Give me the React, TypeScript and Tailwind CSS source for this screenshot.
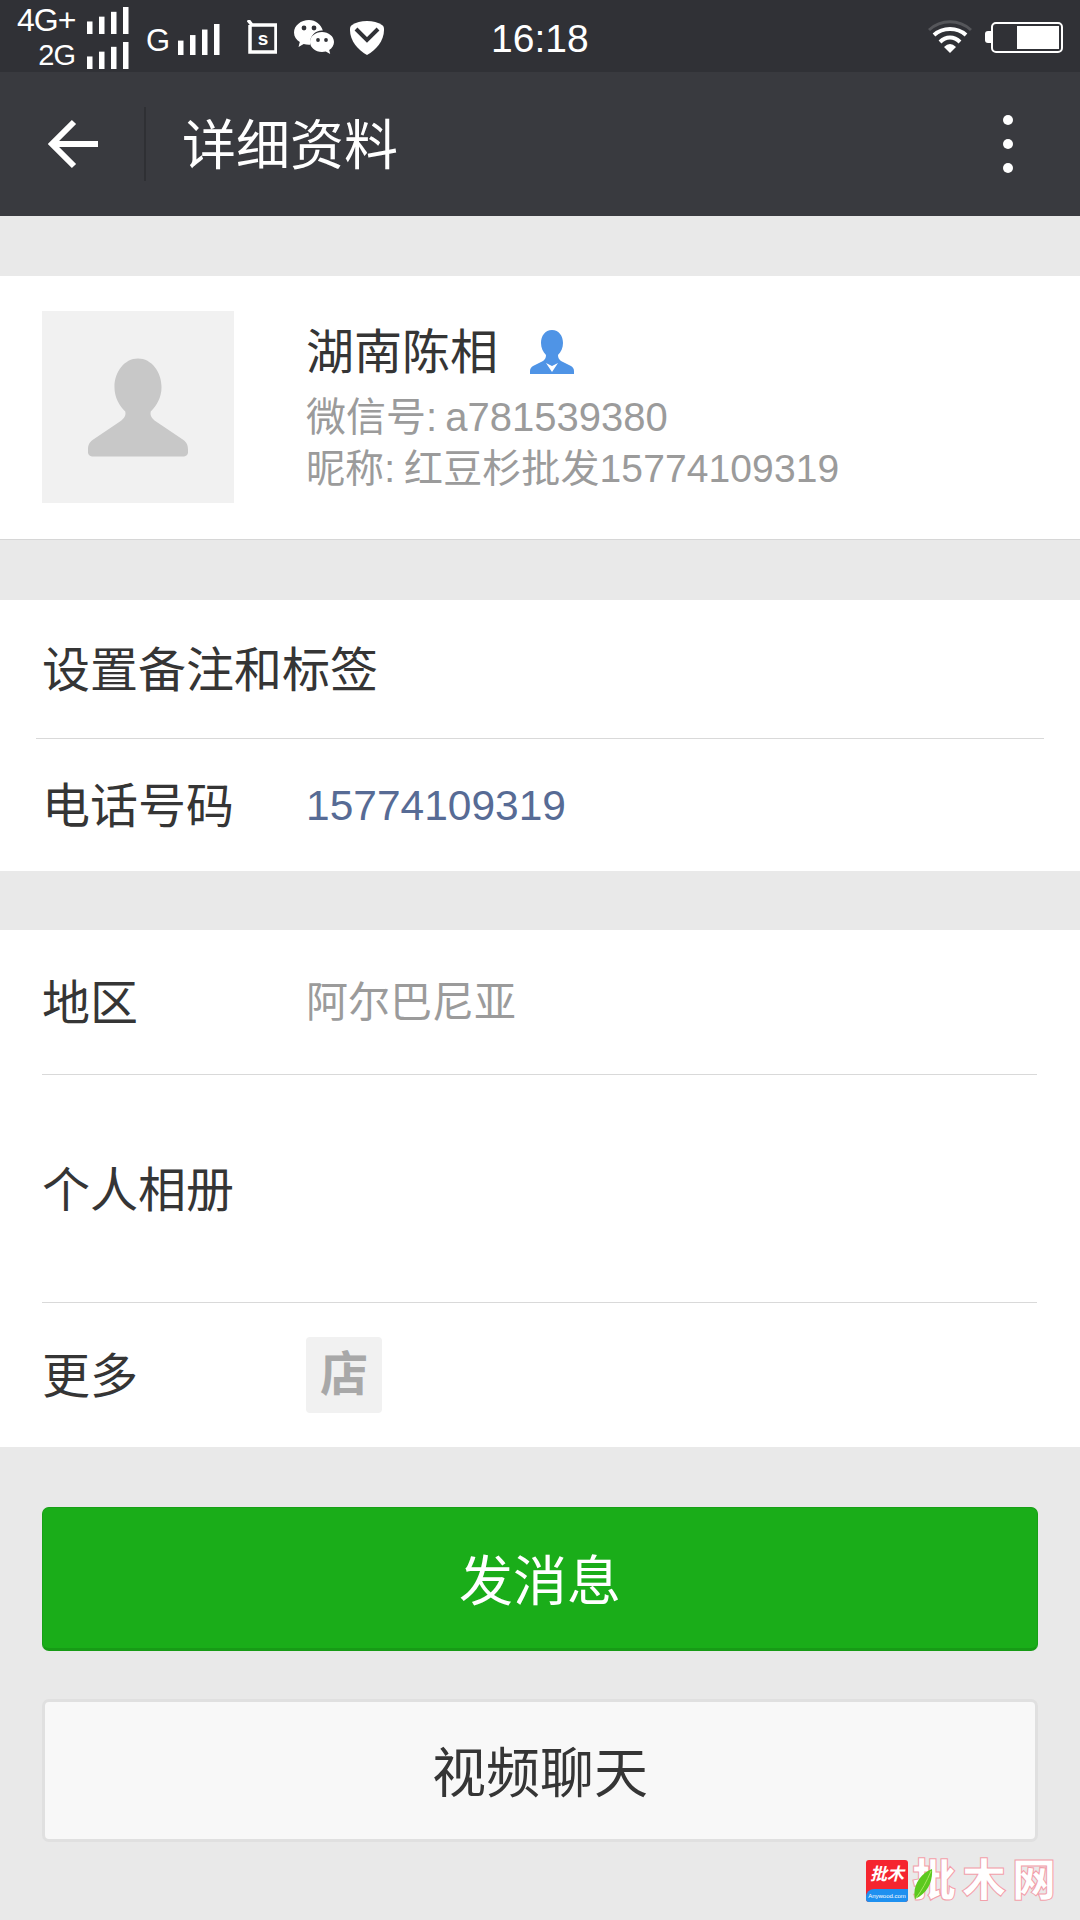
import React from "react";

const cjk = "font-['Liberation_Sans','Noto_Sans_CJK_SC',sans-serif]";

function Bars({ h = 27 }: { h?: number }) {
  return (
    <svg width="42" height={h} viewBox="0 0 42 28" preserveAspectRatio="none" fill="#fff" className="block">
      <rect x="0" y="15" width="5.500" height="13" />
      <rect x="12" y="10" width="5.500" height="18" />
      <rect x="24" y="5" width="5.500" height="23" />
      <rect x="36" y="0" width="5.500" height="28" />
    </svg>
  );
}

function SimS() {
  return (
    <svg width="30" height="34" viewBox="0 0 30 34" className="block">
      <path d="M1 0l4 5h24v27H3V5" fill="none" stroke="#fff" strokeWidth="3.500" />
      <text x="16" y="25" fontSize="19" fontWeight="700" textAnchor="middle" fill="#fff" fontFamily="Liberation Sans">s</text>
    </svg>
  );
}

function WeChat() {
  return (
    <svg width="40" height="34" viewBox="0 0 40 34" className="block">
      <path d="M15 0C7 0 0 5.500 0 12.500c0 4 2.300 7.400 5.800 9.600L4.500 27l5.200-3c1.700.5 3.400.7 5.300.7h1C15.500 15 22 10 28.800 10.500 27 4.500 21.500 0 15 0z" fill="#fff" />
      <circle cx="10" cy="8" r="2.400" fill="#303136" />
      <circle cx="20" cy="8" r="2.400" fill="#303136" />
      <path d="M28 12c-6.600 0-12 4.400-12 10s5.400 10 12 10c1.300 0 2.600-.2 3.800-.5l4.400 2.500-1-4c2.900-1.900 4.800-4.800 4.800-8 0-5.600-5.400-10-12-10z" fill="#fff" />
      <circle cx="24" cy="20" r="1.900" fill="#303136" />
      <circle cx="32" cy="20" r="1.900" fill="#303136" />
    </svg>
  );
}

function Shield() {
  return (
    <svg width="34" height="34" viewBox="0 0 34 34" className="block">
      <path d="M17 0c6 0 11 1.500 15 4 2 1.300 2 3 2 5 0 11-8 20-17 25C8 29 0 20 0 9c0-2 0-3.700 2-5 4-2.500 9-4 15-4z" fill="#fff" />
      <path d="M6 8l11 11L28 8" fill="none" stroke="#303136" strokeWidth="4" />
    </svg>
  );
}

function Wifi() {
  return (
    <svg width="44" height="34" viewBox="0 0 44 34" fill="none" className="block">
      <path d="M1 10C13 -1 31 -1 43 10" stroke="#55565a" strokeWidth="3" />
      <path d="M6 15C15 7 29 7 38 15" stroke="#fff" strokeWidth="4" />
      <path d="M12 22C18 16 26 16 32 22" stroke="#fff" strokeWidth="4" />
      <path d="M16 27Q22 21 28 27L22 33Z" fill="#fff" />
    </svg>
  );
}

function Battery() {
  return (
    <div className="flex items-center">
      <div className="w-[6px] h-[12px] bg-white rounded-l-[3px]" />
      <div className="w-[72px] h-[31px] border-[2px] border-white rounded-[5px] flex justify-end items-center pr-[2px]">
        <div className="w-[42px] h-[23px] bg-white" />
      </div>
    </div>
  );
}

function Row({ label, children, h, divider }: { label: string; children?: React.ReactNode; h: string; divider?: string }) {
  return (
    <div className={`${h} relative flex items-center pl-[42px]`}>
      <div className="w-[264px] text-[48px] leading-none text-[#353535] whitespace-nowrap pt-[3px]">{label}</div>
      {children}
      {divider && <div className={`absolute bottom-0 h-[1px] bg-[#d9d9d9] ${divider}`} />}
    </div>
  );
}

function Watermark() {
  return (
    <div className="absolute left-[866px] top-[1860px] flex items-start">
      <div className="w-[42px] h-[42px] rounded-[3px] overflow-hidden flex flex-col bg-[#f5252f]">
        <div className="h-[29px] flex items-center justify-center text-[17px] leading-none font-bold text-white italic">批木</div>
        <div className="h-[13px] bg-[#1e90f0] rounded-tl-[8px] flex items-center justify-center text-[6px] leading-none text-white whitespace-nowrap">Anywood.com</div>
      </div>
      <div className="relative ml-[4px] mt-[-1px] flex text-[44px] leading-[44px] tracking-[6px] font-black text-white [-webkit-text-stroke:1px_#f2a0aa] whitespace-nowrap">
        批木网
        <svg width="20" height="30" viewBox="0 0 20 30" className="absolute left-[2px] top-[10px]">
          <path d="M18 0C19 12 14 24 1 30C-2 17 6 5 18 0z" fill="#5cc91e" />
          <path d="M17 2C13 12 8 21 2 29" stroke="#a6e860" strokeWidth="1" fill="none" />
        </svg>
      </div>
    </div>
  );
}

export default function App() {
  return (
    <div className={`relative w-[1080px] h-[1920px] overflow-hidden bg-[#e9e9e9] ${cjk}`}>
      <div className="h-[72px] bg-[#303136] flex items-center text-white relative">
        <div className="w-[112px] ml-[17px] mr-[17px] flex flex-col items-end gap-[8px] self-start pt-[7px] shrink-0">
          <div className="w-full flex items-end justify-between h-[27px]">
            <span className="text-[32px] leading-[28px] tracking-[-1px] whitespace-nowrap">4G+</span>
            <Bars />
          </div>
          <div className="flex items-end gap-[12px] h-[27px]">
            <span className="text-[29px] leading-[28px] tracking-[-1px]">2G</span>
            <Bars />
          </div>
        </div>
        <span className="text-[31px] leading-none w-[32px] mt-[9px]">G</span>
        <div className="mt-[6px]"><Bars h={31} /></div>
        <div className="ml-[27px] mt-[2px]"><SimS /></div>
        <div className="ml-[17px] mt-[2px]"><WeChat /></div>
        <div className="ml-[16px] mt-[4px]"><Shield /></div>
        <div className="ml-[107px] text-[39px] leading-none mt-[4px]">16:18</div>
        <div className="ml-auto mt-[2px]"><Wifi /></div>
        <div className="ml-[13px] mr-[17px] mt-[2px]"><Battery /></div>
      </div>

      <div className="h-[144px] bg-[#393a3f] flex items-center relative">
        <svg width="50" height="50" viewBox="0 0 50 50" className="ml-[48px]" fill="none" stroke="#fff" strokeWidth="6">
          <path d="M26 3L4 25l22 22" />
          <path d="M4 25h46" />
        </svg>
        <div className="ml-[46px] w-[2px] h-[74px] bg-[#2f3034]" />
        <div className="ml-[36px] text-[54px] leading-none text-white pt-[3px]">详细资料</div>
        <div className="ml-auto mr-[67px] flex flex-col gap-[14px]">
          <div className="w-[10px] h-[10px] rounded-full bg-white" />
          <div className="w-[10px] h-[10px] rounded-full bg-white" />
          <div className="w-[10px] h-[10px] rounded-full bg-white" />
        </div>
      </div>

      <div className="mt-[60px] h-[264px] bg-white border-b border-[#d6d6d6] flex pl-[42px] pt-[35px]">
        <div className="w-[192px] h-[192px] bg-[#f1f1f1] flex items-center justify-center shrink-0">
          <svg width="100" height="99" viewBox="0 0 102 100">
            <path d="M51 0c-14 0-24 14-24 29 0 11 5 19 11 25 1 4-1 7-5 10L5 83c-4 3-5 6-5 10v3c0 2 2 4 4 4h94c2 0 4-2 4-4v-3c0-4-1-7-5-10L69 64c-4-3-6-6-5-10 6-6 11-14 11-25C75 14 65 0 51 0z" fill="#c8c8c8" />
          </svg>
        </div>
        <div className="ml-[72px] pt-[14px]">
          <div className="flex items-center h-[56px]">
            <span className="text-[48px] leading-none text-[#353535]">湖南陈相</span>
            <svg width="44" height="44" viewBox="0 0 44 44" className="ml-[32px] mt-[-2px]">
              <path d="M22 0c-7 0-11 6-11 13 0 5 2 9 5 12 0 3-1 4-3 6L3 36c-2 1-3 3-3 5v3h44v-3c0-2-1-4-3-5l-10-5c-2-2-3-3-3-6 3-3 5-7 5-12 0-7-4-13-11-13z" fill="#4f94e6" />
              <path d="M16 33l6 9 6-9-6 3z" fill="#fff" />
            </svg>
          </div>
          <div className="mt-[10px] text-[40px] leading-[52px] text-[#9b9b9b] [word-spacing:-3px]">微信号: a781539380</div>
          <div className="text-[39px] leading-[52px] text-[#9b9b9b] [word-spacing:-2px] tracking-[0.1px]">昵称: 红豆杉批发15774109319</div>
        </div>
      </div>

      <div className="mt-[60px] bg-white">
        <Row label="设置备注和标签" h="h-[139px]" divider="left-[36px] right-[36px]" />
        <Row label="电话号码" h="h-[132px]">
          <span className="text-[42.500px] leading-none text-[#576b95] pt-[3px]">15774109319</span>
        </Row>
      </div>

      <div className="mt-[59px] bg-white">
        <Row label="地区" h="h-[145px]" divider="left-[42px] right-[43px]">
          <span className="text-[42px] leading-none text-[#9b9b9b]">阿尔巴尼亚</span>
        </Row>
        <Row label="个人相册" h="h-[228px]" divider="left-[42px] right-[43px]" />
        <Row label="更多" h="h-[144px]">
          <div className="w-[76px] h-[76px] rounded-[4px] bg-[#f1f1f1] flex items-center justify-center text-[48px] leading-none font-bold text-[#a8a8a8]">店</div>
        </Row>
      </div>

      <div className="mt-[60px] mx-[42px] flex flex-col gap-[48px]">
        <div className="h-[144px] rounded-[7px] bg-[#1aad19] border border-[#17a016] border-b-[3px] border-b-[#179b16] flex items-center justify-center text-[54px] leading-none text-white pt-[8px]">发消息</div>
        <div className="h-[143px] rounded-[7px] bg-[#f8f8f8] border-[3px] border-[#e0e0e0] flex items-center justify-center text-[54px] leading-none text-[#353535] pt-[6px]">视频聊天</div>
      </div>

      <Watermark />
    </div>
  );
}
